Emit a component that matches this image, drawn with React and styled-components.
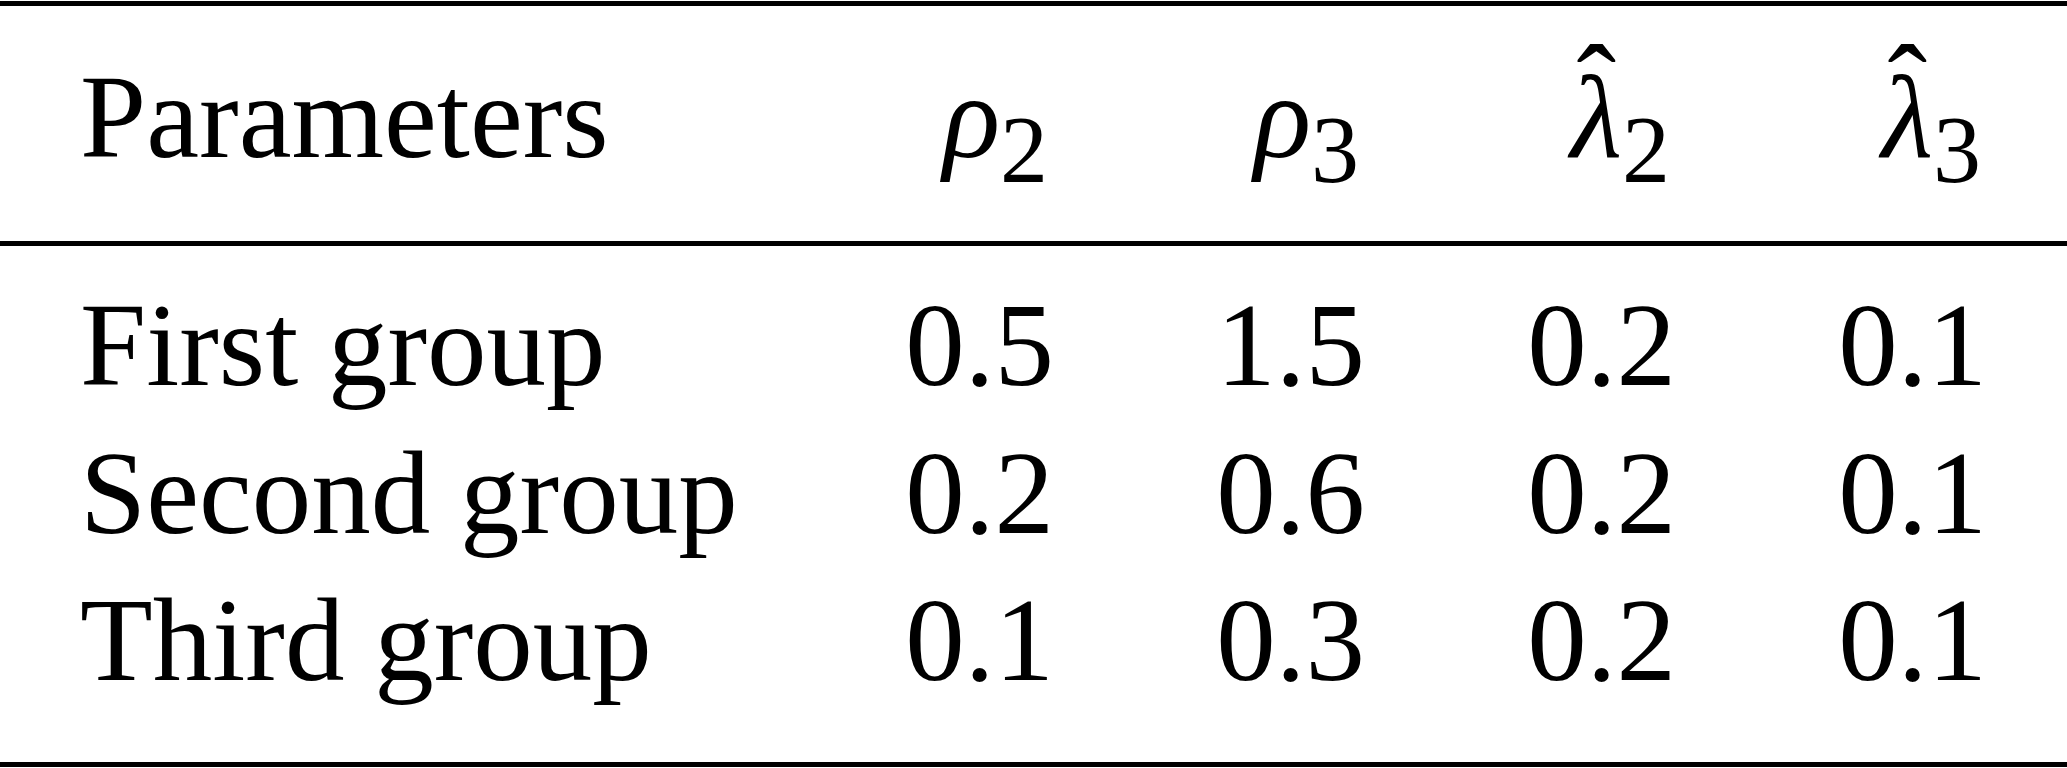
import React from 'react';
import styled, { createGlobalStyle } from 'styled-components';

const Global = createGlobalStyle`
  html, body { margin: 0; padding: 0; background: #fff; }
  body {
    font-family: "Liberation Serif", "Times New Roman", serif;
    color: #000;
  }
`;

const Table = styled.div`
  width: 2067px;
  margin-top: 1px;
  border-top: 5px solid #000;
  border-bottom: 5px solid #000;
`;

const Row = styled.div`
  display: grid;
  grid-template-columns: 1fr repeat(4, 311px);
  padding: 0 80px;
  font-size: 119px;
  line-height: 147.5px;
  white-space: nowrap;
`;

const HeadRow = styled(Row)`
  padding-top: 38px;
  padding-bottom: 49.5px;
  border-bottom: 5px solid #000;
`;

const Body = styled.div`
  padding: 26px 0 47.4px;
`;

const Label = styled.div`
  text-align: left;
`;

const Value = styled.div`
  text-align: right;
`;

const MathCell = styled(Value)`
  padding-right: 6px;
`;

const Var = styled.span`
  font-style: italic;
`;

const Sub = styled.span`
  font-size: 96px;
  line-height: 0;
  vertical-align: -25px;
  font-style: normal;
`;

const Accent = styled.span`
  display: inline-grid;
  justify-items: center;
  line-height: 1;
`;

const Base = styled.span`
  grid-area: 1 / 1;
  font-style: italic;
`;

const Hat = styled.span`
  grid-area: 1 / 1;
  font-style: normal;
  transform: translate(0px, -30px);
`;

const headers = [
  { kind: 'rho', sub: '2' },
  { kind: 'rho', sub: '3' },
  { kind: 'lambda', sub: '2' },
  { kind: 'lambda', sub: '3' },
];

const rows = [
  ['First group', '0.5', '1.5', '0.2', '0.1'],
  ['Second group', '0.2', '0.6', '0.2', '0.1'],
  ['Third group', '0.1', '0.3', '0.2', '0.1'],
];

function Symbol({ kind, sub }) {
  if (kind === 'rho') {
    return (
      <MathCell>
        <Var>ρ</Var>
        <Sub>{sub}</Sub>
      </MathCell>
    );
  }
  return (
    <MathCell>
      <Accent>
        <Base>λ</Base>
        <Hat>ˆ</Hat>
      </Accent>
      <Sub>{sub}</Sub>
    </MathCell>
  );
}

export default function App() {
  return (
    <>
      <Global />
      <Table>
        <HeadRow>
          <Label>Parameters</Label>
          {headers.map((h, i) => (
            <Symbol key={i} kind={h.kind} sub={h.sub} />
          ))}
        </HeadRow>
        <Body>
          {rows.map((r) => (
            <Row key={r[0]}>
              <Label>{r[0]}</Label>
              {r.slice(1).map((v, i) => (
                <Value key={i}>{v}</Value>
              ))}
            </Row>
          ))}
        </Body>
      </Table>
    </>
  );
}
